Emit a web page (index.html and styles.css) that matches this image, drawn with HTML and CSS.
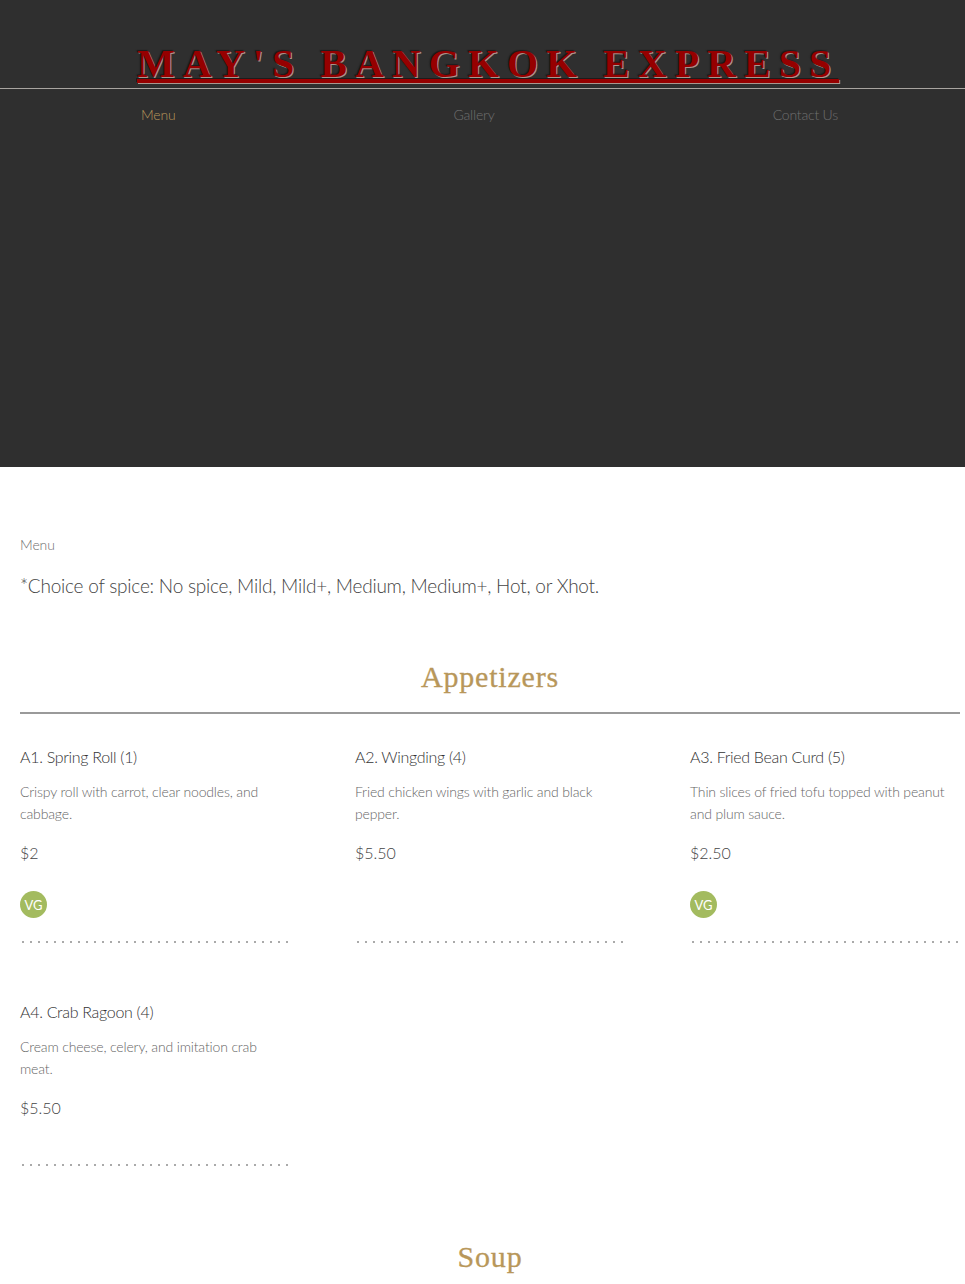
FILE: index.html
```html
<!DOCTYPE html>
<html lang="en">
<head>
    <meta charset="UTF-8">
    <meta name="viewport" content="width=device-width, initial-scale=1.0">
    <title>May's Bangkok Express</title>
    <link rel="stylesheet" href="styles.css">
</head>
<body>
    <header class="hero">
        <h1 class="site-title">MAY'S BANGKOK EXPRESS</h1>
        <nav class="site-nav">
            <a class="nav-link active" href="#">Menu</a>
            <a class="nav-link" href="#">Gallery</a>
            <a class="nav-link" href="#">Contact Us</a>
        </nav>
    </header>

    <main class="menu">
        <div class="menu-name">Menu</div>
        <p class="menu-note">*Choice of spice: No spice, Mild, Mild+, Medium, Medium+, Hot, or Xhot.</p>

        <h2 class="section-title">Appetizers</h2>
        <div class="section-rule"></div>

        <div class="items">
            <div class="item">
                <div class="item-name">A1. Spring Roll (1)</div>
                <div class="item-desc">Crispy roll with carrot, clear noodles, and cabbage.</div>
                <div class="item-price">$2</div>
                <div class="item-tags"><span class="tag">VG</span></div>
                <div class="item-dots"></div>
            </div>
            <div class="item">
                <div class="item-name">A2. Wingding (4)</div>
                <div class="item-desc">Fried chicken wings with garlic and black pepper.</div>
                <div class="item-price">$5.50</div>
                <div class="item-tags"></div>
                <div class="item-dots"></div>
            </div>
            <div class="item">
                <div class="item-name">A3. Fried Bean Curd (5)</div>
                <div class="item-desc">Thin slices of fried tofu topped with peanut and plum sauce.</div>
                <div class="item-price">$2.50</div>
                <div class="item-tags"><span class="tag">VG</span></div>
                <div class="item-dots"></div>
            </div>
            <div class="item">
                <div class="item-name">A4. Crab Ragoon (4)</div>
                <div class="item-desc">Cream cheese, celery, and imitation crab meat.</div>
                <div class="item-price">$5.50</div>
                <div class="item-dots no-tags"></div>
            </div>
        </div>

        <h2 class="section-title soup">Soup</h2>
    </main>
</body>
</html>
```

FILE: styles.css
```css
body {
    margin: 0;
    background-color: #fff;
    font-family: Lato, "Open Sans", sans-serif;
    font-weight: 300;
    overflow-x: hidden;
}

.hero {
    height: 467px;
    box-sizing: border-box;
    padding-top: 41px;
    background-color: #2f2f2f;
}

.site-title {
    margin: 0;
    height: 48px;
    box-sizing: border-box;
    border-bottom: 1px solid #a8a4a0;
    padding-left: 137px;
    font-family: "Liberation Serif", serif;
    font-size: 40px;
    font-weight: bold;
    line-height: 46px;
    letter-spacing: 8px;
    white-space: nowrap;
    color: #960000;
    text-decoration: underline;
    text-decoration-thickness: 4px;
    text-underline-offset: 2px;
    text-shadow: -1px -1px 1px #1c1c1c, 1px 1px 0 #a89890;
}

.site-nav {
    display: flex;
    justify-content: space-between;
    width: 697px;
    margin: 15px 0 0 141px;
}

.nav-link {
    font-size: 14px;
    line-height: 21px;
    letter-spacing: -0.2px;
    color: #707070;
    text-decoration: none;
}

.nav-link.active {
    color: #b8975a;
}

.menu {
    padding: 68px 5px 0 20px;
}

.menu-name {
    font-size: 14px;
    line-height: 20px;
    letter-spacing: -0.1px;
    color: #6e6e6e;
}

.menu-note {
    margin: 17px 0 0;
    font-size: 19px;
    line-height: 28px;
    letter-spacing: -0.23px;
    color: #444;
}

.section-title {
    margin: 57px 0 0;
    text-align: center;
    font-family: "Liberation Serif", serif;
    font-size: 30px;
    font-weight: normal;
    line-height: 40px;
    letter-spacing: 0.8px;
    color: #b8975a;
    -webkit-text-stroke: 0.3px #b8975a;
}

.section-rule {
    height: 2px;
    margin-top: 15px;
    background-color: #9a9a9a;
}

.items {
    display: grid;
    grid-template-columns: repeat(3, 270px);
    column-gap: 65px;
    row-gap: 58px;
    margin-top: 32px;
}

.item-name {
    font-size: 16px;
    line-height: 22px;
    letter-spacing: -0.3px;
    color: #333;
}

.item-desc {
    margin-top: 12.5px;
    font-size: 14px;
    line-height: 22.5px;
    letter-spacing: -0.15px;
    color: #666;
}

.item-price {
    margin-top: 16.5px;
    font-size: 16px;
    line-height: 22px;
    color: #444;
}

.item-tags {
    display: flex;
    height: 28px;
    margin-top: 27px;
}

.tag {
    display: flex;
    align-items: center;
    justify-content: center;
    width: 27px;
    height: 27px;
    border-radius: 50%;
    background-color: #a3bb5f;
    font-size: 13px;
    font-weight: 400;
    color: #fff;
}

.item-dots {
    height: 2px;
    margin-top: 22px;
    background-image: linear-gradient(to right, #aaa 2px, transparent 2px);
    background-size: 8px 2px;
    background-position: 2px 0;
    background-repeat: repeat-x;
}

.item-dots.no-tags {
    margin-top: 45px;
}

.section-title.soup {
    margin-top: 71px;
}
```
